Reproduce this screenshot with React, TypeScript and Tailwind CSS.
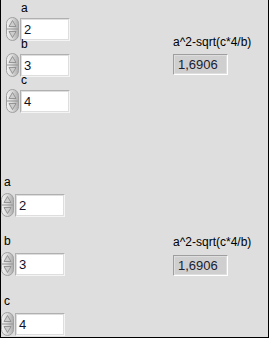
import React from 'react';

function Spinner() {
  return (
    <svg width="13" height="24" viewBox="0 0 13 24" className="shrink-0">
      <defs>
        <linearGradient id="spin" x1="0" y1="0" x2="1" y2="0">
          <stop offset="0" stopColor="#f4f4f4" />
          <stop offset="0.5" stopColor="#d8d8d8" />
          <stop offset="1" stopColor="#ababab" />
        </linearGradient>
      </defs>
      <rect x="0.5" y="0.5" width="12" height="23" rx="6" fill="url(#spin)" stroke="#a0a0a0" />
      <line x1="1" y1="12" x2="12" y2="12" stroke="#959595" />
      <path d="M6.5 3.5 L10 9.5 L3 9.5 Z" fill="#cdcdcd" stroke="#858585" strokeWidth="0.8" />
      <path d="M3 14.5 L10 14.5 L6.5 20.5 Z" fill="#cdcdcd" stroke="#858585" strokeWidth="0.8" />
    </svg>
  );
}

function NumControl({ label, value, wide }: { label: string; value: string; wide?: boolean }) {
  return (
    <div className="flex flex-col">
      <div className={wide ? 'h-[17px] leading-[13px] pl-[3px] text-black' : 'h-[15px] leading-[13px] pl-[15px] text-black'}>
        {label}
      </div>
      <div className="flex items-center h-[24px]">
        <Spinner />
        <div className="w-[50px] h-[23px] ml-[1px] border border-t-[#b0b0b0] border-l-[#b0b0b0] border-r-[#f4f4f4] border-b-[#f4f4f4] p-[1px]">
          <div className="h-full bg-white pl-[2px] text-[13px] leading-[19px] text-[#101028]">{value}</div>
        </div>
      </div>
    </div>
  );
}

function Indicator({ lower }: { lower?: boolean }) {
  return (
    <div className="flex flex-col">
      <div className="h-[13px] leading-[13px] text-black">a^2-sqrt(c*4/b)</div>
      <div
        className={
          (lower ? 'mt-[6px] ' : 'mt-[5px] ') +
          'w-[55px] h-[21px] border border-t-[#9e9e9e] border-l-[#9e9e9e] border-r-white border-b-white p-[1px]'
        }
      >
        <div className="h-full bg-[#cfcfcf] pl-[3px] text-[13px] leading-[17px] text-[#202030]">1,6906</div>
      </div>
    </div>
  );
}

export default function App() {
  return (
    <div
      className="w-[269px] h-[338px] overflow-hidden bg-[#dedede] border-l border-r border-b border-black text-[12px]"
      style={{ fontFamily: '"Liberation Sans", Arial, sans-serif' }}
    >
      {/* upper cluster */}
      <div className="flex pt-[2px] pl-[5px]">
        <div className="w-[167px] flex flex-col">
          <NumControl label="a" value="2" />
          <div className="-mt-[3px]">
            <NumControl label="b" value="3" />
          </div>
          <div className="-mt-[3px]">
            <NumControl label="c" value="4" />
          </div>
        </div>
        <div className="pt-[34px]">
          <Indicator />
        </div>
      </div>

      {/* lower cluster */}
      <div className="flex mt-[63px]">
        <div className="w-[172px] flex flex-col">
          <NumControl label="a" value="2" wide />
          <div className="mt-[18px]">
            <NumControl label="b" value="3" wide />
          </div>
          <div className="mt-[19px]">
            <NumControl label="c" value="4" wide />
          </div>
        </div>
        <div className="pt-[60px]">
          <Indicator lower />
        </div>
      </div>
    </div>
  );
}
